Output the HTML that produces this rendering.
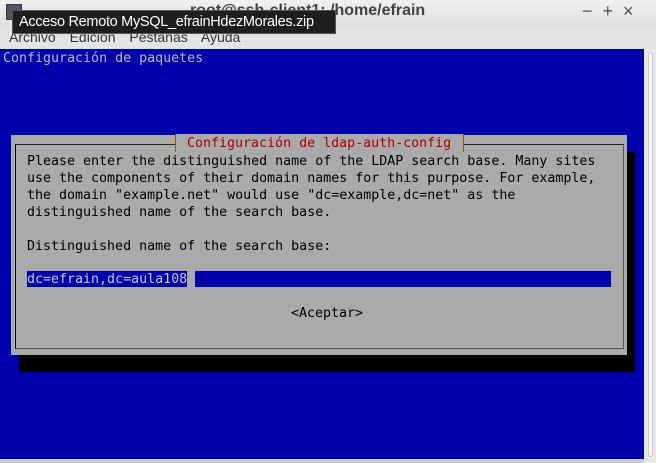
<!DOCTYPE html>
<html><head><meta charset="utf-8"><style>
*{margin:0;padding:0;box-sizing:border-box}
body{width:656px;height:463px;overflow:hidden;background:#dcdcdc;font-family:"Liberation Sans",sans-serif;position:relative}
.t{position:absolute;font-family:"DejaVu Sans Mono",monospace;font-size:13.3px;line-height:17px;white-space:pre;color:#000}
</style></head><body>
<div style="position:absolute;left:0;top:0;width:656px;height:28px;background:linear-gradient(#f0f0ef,#dedede)"></div>
<div style="position:absolute;left:6px;top:4px;width:16px;height:16px;background:#556;border:1px solid #333"></div>
<div style="position:absolute;left:190px;top:2px;font-size:16px;font-weight:bold;color:#444;white-space:nowrap">root@ssh-client1: /home/efrain</div>
<div style="position:absolute;left:582px;top:1px;font-size:18px;color:#555;letter-spacing:10px;white-space:nowrap">−+×</div>
<div style="position:absolute;left:0;top:28px;width:656px;height:21px;background:#e4e4e4"></div>
<div style="position:absolute;left:9px;top:29px;font-size:14px;color:#333;word-spacing:10px;white-space:nowrap">Archivo Edición Pestañas Ayuda</div>
<div style="position:absolute;left:12px;top:10px;width:324px;height:24px;background:#1e1e1e;border:1px solid #555;color:#fff;font-size:14.5px;padding:3px 0 0 6px;white-space:nowrap;overflow:hidden;letter-spacing:-0.3px">Acceso Remoto MySQL_efrainHdezMorales.zip</div>
<div style="position:absolute;left:0;top:49px;width:644px;height:410px;background:#0000aa"></div>
<div style="position:absolute;left:644px;top:49px;width:12px;height:414px;background:#e8e8e8"></div>
<div style="position:absolute;left:648px;top:52px;width:5px;height:405px;background:#f8f8f8;border:1px solid #ccc;border-radius:3px"></div>
<div style="position:absolute;left:0;top:459px;width:644px;height:4px;background:#ccc"></div>
<div class="t" style="left:3px;top:50px;color:#b8b8d8">Configuración de paquetes</div>
<div style="position:absolute;left:19px;top:152px;width:616px;height:220px;background:#000"></div>
<div style="position:absolute;left:11px;top:135px;width:616px;height:220px;background:#aaa"></div>
<div style="position:absolute;left:15px;top:144px;width:609px;height:205px;border:1px solid #000;border-right-color:#555;border-bottom-color:#555;border-top-color:#222"></div>
<div style="position:absolute;left:175px;top:134px;width:289px;height:18px;background:#aaa;border-left:1px solid #8a5a00;border-right:1px solid #8a5a00"></div>
<div class="t" style="left:187px;top:135px;color:#b00000">Configuración de ldap-auth-config</div>
<div class="t" style="left:27px;top:153px">Please enter the distinguished name of the LDAP search base. Many sites
use the components of their domain names for this purpose. For example,
the domain "example.net" would use "dc=example,dc=net" as the
distinguished name of the search base.

Distinguished name of the search base:</div>
<div style="position:absolute;left:27px;top:271px;width:584px;height:16px;background:#0000aa"></div>
<div class="t" style="left:27px;top:271px;color:#c8c8e8">dc=efrain,dc=aula108</div>
<div style="position:absolute;left:187px;top:271px;width:8px;height:16px;background:#aaa"></div>
<div class="t" style="left:291px;top:305px">&lt;Aceptar&gt;</div>
</body></html>
